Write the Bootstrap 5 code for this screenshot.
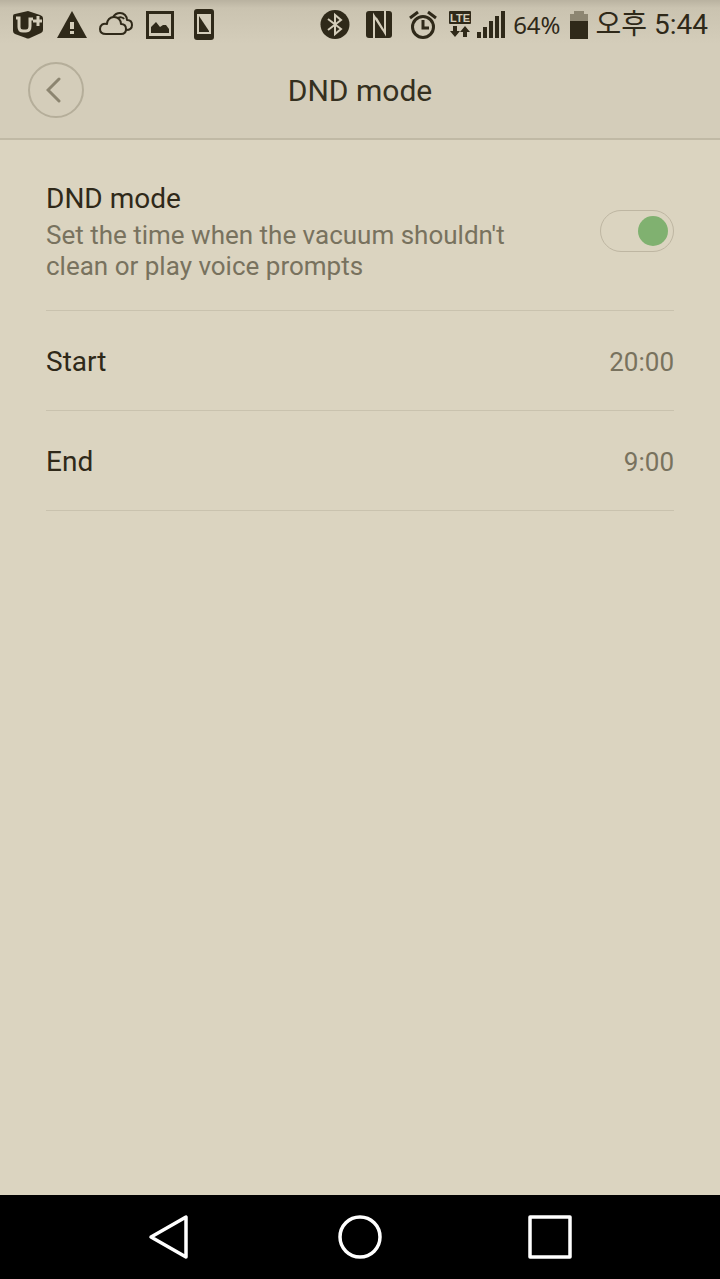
<!DOCTYPE html>
<html lang="en">
<head>
<meta charset="utf-8">
<meta name="viewport" content="width=device-width, initial-scale=1">
<title>DND mode</title>
<link href="https://cdn.jsdelivr.net/npm/bootstrap@5.3.0/dist/css/bootstrap.min.css" rel="stylesheet">
<style>
  :root { --ink: #2f2919; --paper: #dbd4c0; --bar: #d4cdba; --rule: #c9c2ae; --muted: #78725e; }
  body { background: var(--paper); color: var(--ink); font-family: Roboto, "Noto Sans CJK KR", sans-serif; }
  .top-area { background: linear-gradient(#b9b2a0, #cac3b0 8px, var(--bar) 44px); border-bottom: 2px solid #c0b9a5; }
  .status-bar { height: 50px; padding: 0 12px 0 6px; font-size: 26px; line-height: 50px; }
  .status-cell { width: 44px; }
  .status-bar svg, .os-nav svg, .back-btn svg { display: block; }
  .status-pct { font-family: "Noto Sans", sans-serif; font-size: 24px; margin: 0 9px 0 6px; }
  .status-time { font-size: 28px; line-height: 52px; }
  .title-bar { display: grid; grid-template-columns: 56px 1fr 56px; height: 88px; padding: 12px 28px 20px; }
  .title-bar h1 { font-size: 30px; line-height: 58px; font-weight: 400; color: #353020; }
  .back-btn { width: 56px; height: 56px; border: 2px solid #b5ae9a; color: #8c8570; }
  .settings { padding: 0 46px; }
  .setting { border: 0; border-bottom: 1px solid var(--rule); background: none; color: inherit; }
  .setting-main { padding: 40px 0 28px; }
  .setting-time { height: 100px; padding: 2px 0 0; }
  .setting-name { font-size: 28px; line-height: 38px; }
  .setting-note { font-size: 26px; line-height: 31px; padding-top: 2px; color: var(--muted); max-width: 490px; }
  .setting-value { font-size: 26px; line-height: 38px; color: var(--muted); }
  .form-check-input.dnd-toggle { width: 74px; height: 42px; margin: 0; border: 1px solid #beb6a2; border-radius: 21px; background: none; display: flex; align-items: center; padding: 0 5px; float: none; }
  .dnd-toggle::before { content: ""; width: 30px; height: 30px; border-radius: 50%; background: #aaa38f; }
  .form-check-input.dnd-toggle:checked { justify-content: flex-end; border-color: #beb6a2; background: none; }
  .dnd-toggle:checked::before { background: #80b170; }
  .os-nav { height: 84px; background: #000; }
  .os-nav button { width: 190px; color: #fff; background: none; }
</style>
</head>
<body class="d-flex flex-column min-vh-100">

<header class="top-area">
  <div class="status-bar d-flex align-items-center justify-content-between">
    <div class="d-flex align-items-center">
      <div class="status-cell d-flex justify-content-center">
        <svg width="32" height="28" viewBox="0 0 32 28" fill="none">
          <path d="M1 5 Q1 3 3 3 L16 0 28 4 Q31 5 31 7 V19 Q31 21 29 22 L18 27 Q16 28 14 27 L3 23 Q1 22 1 20Z" fill="#2f2919"/>
          <path d="M4 7H7V16Q7 20 11 20H14Q18 20 18 15V8H21" stroke="#d4cdba" stroke-width="3"/>
          <path d="M21 10H30M26 5V15" stroke="#d4cdba" stroke-width="3"/>
        </svg>
      </div>
      <div class="status-cell d-flex justify-content-center">
        <svg width="32" height="28" viewBox="0 0 32 28"><path d="M16 0 31 27H1Z" fill="#2f2919"/><path d="M14 11h4v7h-4zM14 20h4v3h-4z" fill="#d4cdba"/></svg>
      </div>
      <div class="status-cell d-flex justify-content-center">
        <svg width="36" height="26" viewBox="0 0 36 26" fill="none" stroke="#2f2919" stroke-width="2" stroke-linejoin="round">
          <path d="M8 22C4 22 2 20 2 17C2 13 5 11 9 12C9 8 12 5 16 5C20 5 23 8 23 12C26 12 28 14 28 17C28 20 26 22 23 22Z"/>
          <path d="M15 5C17 2 19 1 22 1C26 1 29 4 29 8C32 8 34 10 34 13C34 16 32 18 28 18M20 6C22 5 25 5 26 7"/>
        </svg>
      </div>
      <div class="status-cell d-flex justify-content-center">
        <svg width="28" height="28" viewBox="0 0 28 28"><rect x="1.500" y="1.500" width="25" height="25" fill="none" stroke="#2f2919" stroke-width="3"/><path d="M5 22V16L10 11 14 16 17 14H20L23 18V22Z" fill="#2f2919"/></svg>
      </div>
      <div class="status-cell d-flex justify-content-center">
        <svg width="20" height="32" viewBox="0 0 20 32"><rect width="20" height="31" rx="3" fill="#2f2919"/><path d="M3 5H17V25H3Z" fill="#d4cdba"/><path d="M5 7 15 22V23H5Z" fill="#2f2919"/></svg>
      </div>
    </div>
    <div class="d-flex align-items-center">
      <div class="status-cell d-flex justify-content-center">
        <svg width="30" height="30" viewBox="0 0 30 30" fill="none"><circle cx="15" cy="14.500" r="14.500" fill="#2f2919"/><path d="M8 9 21 19 15 24V5L21 10 8 20" stroke="#d4cdba" stroke-width="2"/></svg>
      </div>
      <div class="status-cell d-flex justify-content-center">
        <svg width="28" height="28" viewBox="0 0 28 28"><rect x="1" y="0" width="26" height="27" rx="3" fill="#2f2919"/><path d="M9 27V5L18 19M20 0V22L11 7" fill="none" stroke="#d4cdba" stroke-width="2"/></svg>
      </div>
      <div class="status-cell d-flex justify-content-center">
        <svg width="28" height="30" viewBox="0 0 28 30" fill="none" stroke="#2f2919" stroke-width="3"><circle cx="14" cy="17" r="10.500"/><path d="M14 10V18H20M1 8 9 2M27 8 19 2"/></svg>
      </div>
      <svg class="ms-1" width="22" height="28" viewBox="0 0 22 28"><rect width="22" height="13" rx="1" fill="#2f2919"/><text x="11" y="11" text-anchor="middle" font-family="Liberation Sans" font-size="11" font-weight="700" fill="#d4cdba">LTE</text><path d="M4 15H8V20H11L6 26 1 20H4ZM14 26V21H11L16 15 21 21H18V26Z" fill="#2f2919"/></svg>
      <svg class="ms-1" width="32" height="30" viewBox="0 0 32 30" fill="#2f2919"><path d="M2 22h4v6H2zM8 17h4v11H8zM14 11h4v17h-4zM20 6h4v22h-4zM26 1h4v27h-4z"/></svg>
      <span class="status-pct">64%</span>
      <svg class="me-2" width="18" height="28" viewBox="0 0 18 28"><path d="M4 0H14V3H18V10H0V3H4Z" fill="#8d8672"/><path d="M0 10H18V28H0Z" fill="#2f2919"/></svg>
      <span class="status-time">오후 5:44</span>
    </div>
  </div>
  <div class="title-bar">
    <button type="button" class="back-btn btn p-0 rounded-circle d-flex align-items-center justify-content-center" aria-label="Back">
      <svg width="20" height="28" viewBox="0 0 20 28" fill="none" stroke="currentColor" stroke-width="3" stroke-linecap="round"><path d="M13 3 2 14 13 25"/></svg>
    </button>
    <h1 class="m-0 text-center">DND mode</h1>
  </div>
</header>

<main class="settings flex-grow-1">
  <div class="setting setting-main d-flex align-items-center justify-content-between">
    <label for="dnd">
      <span class="setting-name d-block">DND mode</span>
      <span class="setting-note d-block">Set the time when the vacuum shouldn't clean or play voice prompts</span>
    </label>
    <input class="form-check-input dnd-toggle flex-shrink-0" type="checkbox" role="switch" id="dnd" checked>
  </div>
  <button type="button" class="setting setting-time w-100 d-flex align-items-center justify-content-between">
    <span class="setting-name">Start</span><span class="setting-value">20:00</span>
  </button>
  <button type="button" class="setting setting-time w-100 d-flex align-items-center justify-content-between">
    <span class="setting-name">End</span><span class="setting-value">9:00</span>
  </button>
</main>

<nav class="os-nav d-flex justify-content-center" aria-label="System">
  <button type="button" class="border-0 p-0 d-flex align-items-center justify-content-center" aria-label="Back">
    <svg width="44" height="46" viewBox="0 0 44 46" fill="none" stroke="currentColor" stroke-width="3.500" stroke-linejoin="round"><path d="M38 3V43L3 23Z"/></svg>
  </button>
  <button type="button" class="border-0 p-0 d-flex align-items-center justify-content-center" aria-label="Home">
    <svg width="44" height="44" viewBox="0 0 44 44" fill="none" stroke="currentColor" stroke-width="3.500"><circle cx="22" cy="22" r="20"/></svg>
  </button>
  <button type="button" class="border-0 p-0 d-flex align-items-center justify-content-center" aria-label="Recent apps">
    <svg width="44" height="44" viewBox="0 0 44 44" fill="none" stroke="currentColor" stroke-width="3.500" stroke-linejoin="round"><rect x="2" y="2" width="40" height="40"/></svg>
  </button>
</nav>

<script src="https://cdn.jsdelivr.net/npm/bootstrap@5.3.0/dist/js/bootstrap.bundle.min.js"></script>
</body>
</html>
